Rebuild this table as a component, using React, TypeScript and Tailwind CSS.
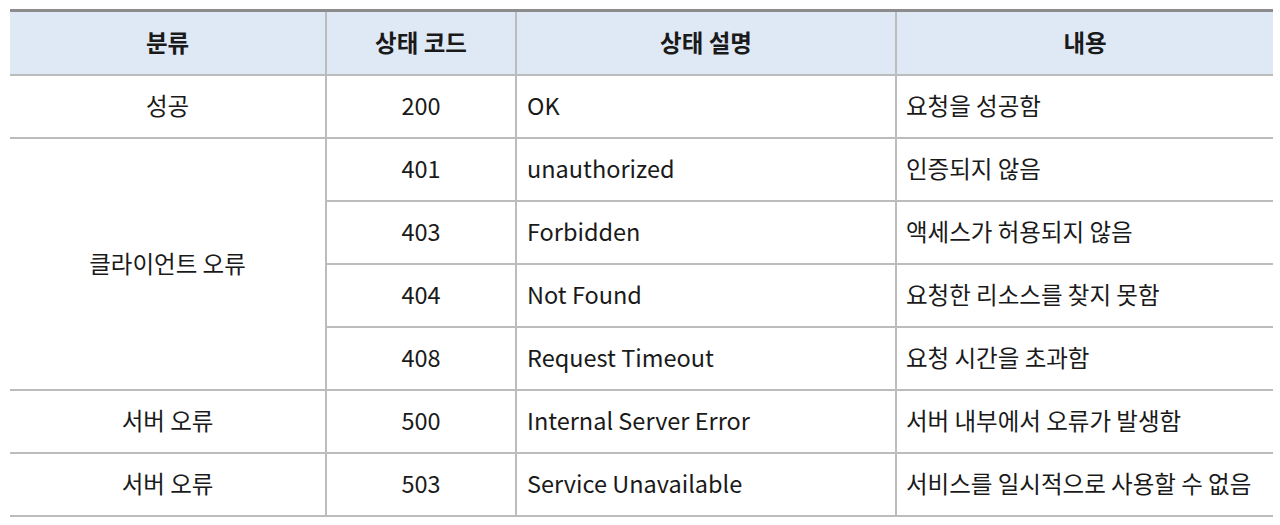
const rows = [
  { group: '성공', span: 1, code: '200', status: 'OK', desc: '요청을 성공함' },
  { group: '클라이언트 오류', span: 4, code: '401', status: 'unauthorized', desc: '인증되지 않음' },
  { group: null, span: 0, code: '403', status: 'Forbidden', desc: '액세스가 허용되지 않음' },
  { group: null, span: 0, code: '404', status: 'Not Found', desc: '요청한 리소스를 찾지 못함' },
  { group: null, span: 0, code: '408', status: 'Request Timeout', desc: '요청 시간을 초과함' },
  { group: '서버 오류', span: 1, code: '500', status: 'Internal Server Error', desc: '서버 내부에서 오류가 발생함' },
  { group: '서버 오류', span: 1, code: '503', status: 'Service Unavailable', desc: '서비스를 일시적으로 사용할 수 없음' },
];

export default function App() {
  return (
    <div
      className="bg-white px-[10px] pt-[9px] text-[23.5px] text-[#1a1a1a]"
      style={{ fontFamily: '"Noto Sans CJK KR", "Noto Sans", sans-serif' }}
    >
      <table className="w-[1263px] table-fixed border-collapse border-t-[3px] border-t-[#8c8c8c]">
        <colgroup>
          <col className="w-[316px]" />
          <col className="w-[190px]" />
          <col className="w-[380px]" />
          <col className="w-[377px]" />
        </colgroup>
        <thead>
          <tr className="h-[64px] bg-[#dfe9f5] font-bold">
            <th className="border-b-2 border-r-2 border-[#bcbcbc] text-center">분류</th>
            <th className="border-b-2 border-r-2 border-[#bcbcbc] text-center">상태 코드</th>
            <th className="border-b-2 border-r-2 border-[#bcbcbc] text-center">상태 설명</th>
            <th className="border-b-2 border-[#bcbcbc] text-center">내용</th>
          </tr>
        </thead>
        <tbody>
          {rows.map((r) => (
            <tr key={r.code} className="h-[63px]">
              {r.group && (
                <td rowSpan={r.span} className="border-b-2 border-r-2 border-[#bcbcbc] text-center">
                  {r.group}
                </td>
              )}
              <td className="border-b-2 border-r-2 border-[#bcbcbc] text-center">{r.code}</td>
              <td className="border-b-2 border-r-2 border-[#bcbcbc] pl-[10px]">{r.status}</td>
              <td className="border-b-2 border-[#bcbcbc] pl-[9px]">{r.desc}</td>
            </tr>
          ))}
        </tbody>
      </table>
    </div>
  );
}
